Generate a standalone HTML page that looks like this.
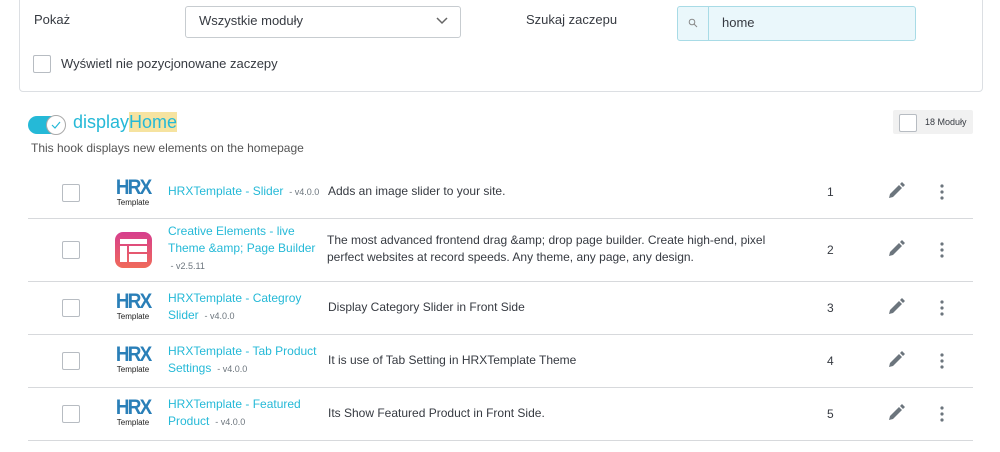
<!DOCTYPE html>
<html><head><meta charset="utf-8"><style>
body{margin:0;width:1000px;height:452px;background:#fff;font-family:"Liberation Sans",sans-serif;color:#363a41;overflow:hidden;position:relative}
.a{position:absolute}
.panel{left:19px;top:-10px;width:962px;height:100px;border:1px solid #dcdfe3;border-radius:4px}
.cb{width:16px;height:16px;border:1px solid #b7bcc2;border-radius:2px;background:#fff}
.sep{left:28px;width:945px;height:1px;background:#d7d9dc}
.link{color:#25b9d7;font-size:12px;line-height:17px}
.ver{font-size:9px;color:#6c757d}
.desc{font-size:12px;line-height:17px}
.hrx{font-weight:bold;color:#2a7fb8;font-size:21px;letter-spacing:-2px;line-height:20px;text-align:center;width:40px}
.hrx b{display:inline-block;transform:scaleX(0.9)}
.hrx small{display:block;font-size:8px;color:#222;font-weight:normal;letter-spacing:0;line-height:10px}
.num{font-size:12px}
</style></head><body>
<div class="a panel"></div>
<div class="a" style="left:34px;top:12px;font-size:13px">Pokaż</div>
<div class="a" style="left:185px;top:6px;width:274px;height:30px;border:1px solid #c7ccd0;border-radius:3px"></div>
<div class="a" style="left:199px;top:13px;font-size:13px">Wszystkie moduły</div>
<svg class="a" style="left:436px;top:17px" width="12" height="8"><path d="M1 1l5 5 5-5" stroke="#666" stroke-width="1.5" fill="none"/></svg>
<div class="a" style="left:526px;top:12px;font-size:13px">Szukaj zaczepu</div>
<div class="a" style="left:677px;top:6px;width:237px;height:33px;border:1px solid #a8dbe6;border-radius:3px;background:#eaf7fb"></div>
<div class="a" style="left:708px;top:7px;width:1px;height:33px;background:#a8dbe6"></div>
<svg class="a" style="left:688px;top:18px" width="10" height="10"><circle cx="4" cy="4" r="2.8" stroke="#888" fill="none"/><path d="M6 6l3 3" stroke="#888"/></svg>
<div class="a" style="left:722px;top:15px;font-size:13px">home</div>
<div class="a cb" style="left:33px;top:55px"></div>
<div class="a" style="left:61px;top:56px;font-size:13px">Wyświetl nie pozycjonowane zaczepy</div>

<div class="a" style="left:28px;top:116px;width:36px;height:18px;border-radius:9px;background:#25b9d7"></div>
<div class="a" style="left:46px;top:115px;width:18px;height:18px;border-radius:50%;background:#fff;border:1px solid #aaa"></div>
<svg class="a" style="left:50px;top:120px" width="12" height="10"><path d="M2 5l3 3 5-6" stroke="#25b9d7" stroke-width="1.2" fill="none"/></svg>
<div class="a" style="left:73px;top:112px;font-size:18px;color:#25b9d7">display<span style="background:#f6e3a0">Home</span></div>
<div class="a" style="left:31px;top:141px;font-size:12px;color:#555">This hook displays new elements on the homepage</div>
<div class="a" style="left:893px;top:110px;width:80px;height:24px;background:#f1f1f1;border-radius:2px"></div>
<div class="a cb" style="left:899px;top:114px"></div>
<div class="a" style="left:925px;top:117px;font-size:9px">18 Moduły</div>

<div class="a cb" style="left:62px;top:184px"></div>
<div class="a hrx" style="left:113px;top:178px"><b>HRX</b><small>Template</small></div>
<div class="a link" style="left:168px;top:183px">HRXTemplate - Slider <span class="ver">&nbsp;- v4.0.0</span></div>
<div class="a desc" style="left:328px;top:183px">Adds an image slider to your site.</div>
<div class="a num" style="left:827px;top:185px">1</div>
<div class="a sep" style="top:218px"></div>

<div class="a cb" style="left:62px;top:241px"></div>
<div class="a" style="left:115px;top:232px;width:37px;height:36px;border-radius:8px;background:linear-gradient(#d63e8e,#f06a5a)"></div>
<div class="a" style="left:120px;top:239px;width:27px;height:5px;background:#fff"></div>
<div class="a" style="left:120px;top:246px;width:7px;height:16px;background:#fff"></div>
<div class="a" style="left:129px;top:246px;width:18px;height:6px;background:#fff"></div>
<div class="a" style="left:129px;top:254px;width:18px;height:8px;background:#fff"></div>
<div class="a link" style="left:168px;top:223px">Creative Elements - live<br>Theme &amp;amp; Page Builder<br><span class="ver">&nbsp;- v2.5.11</span></div>
<div class="a desc" style="left:327px;top:232px">The most advanced frontend drag &amp;amp; drop page builder. Create high-end, pixel<br>perfect websites at record speeds. Any theme, any page, any design.</div>
<div class="a num" style="left:827px;top:243px">2</div>
<div class="a sep" style="top:281px"></div>

<div class="a cb" style="left:62px;top:299px"></div>
<div class="a hrx" style="left:113px;top:292px"><b>HRX</b><small>Template</small></div>
<div class="a link" style="left:168px;top:290px">HRXTemplate - Categroy<br>Slider <span class="ver">&nbsp;- v4.0.0</span></div>
<div class="a desc" style="left:328px;top:299px">Display Category Slider in Front Side</div>
<div class="a num" style="left:827px;top:301px">3</div>
<div class="a sep" style="top:334px"></div>

<div class="a cb" style="left:62px;top:352px"></div>
<div class="a hrx" style="left:113px;top:345px"><b>HRX</b><small>Template</small></div>
<div class="a link" style="left:168px;top:343px">HRXTemplate - Tab Product<br>Settings <span class="ver">&nbsp;- v4.0.0</span></div>
<div class="a desc" style="left:328px;top:352px">It is use of Tab Setting in HRXTemplate Theme</div>
<div class="a num" style="left:827px;top:354px">4</div>
<div class="a sep" style="top:387px"></div>

<div class="a cb" style="left:62px;top:405px"></div>
<div class="a hrx" style="left:113px;top:398px"><b>HRX</b><small>Template</small></div>
<div class="a link" style="left:168px;top:396px">HRXTemplate - Featured<br>Product <span class="ver">&nbsp;- v4.0.0</span></div>
<div class="a desc" style="left:328px;top:405px">Its Show Featured Product in Front Side.</div>
<div class="a num" style="left:827px;top:407px">5</div>
<div class="a sep" style="top:440px"></div>

<svg class="a" style="left:880px;top:172px" width="80" height="270">
<g id="ic">
<path d="M9 26l1-4 9-9 3 3-9 9z M20 12l2-2 3 3-2 2z" fill="#6c757d"/>
<circle cx="62" cy="14" r="1.6" fill="#6c757d"/><circle cx="62" cy="20" r="1.6" fill="#6c757d"/><circle cx="62" cy="26" r="1.6" fill="#6c757d"/>
</g>
<use href="#ic" y="58"/><use href="#ic" y="116"/><use href="#ic" y="169"/><use href="#ic" y="222"/>
</svg>
</body></html>
